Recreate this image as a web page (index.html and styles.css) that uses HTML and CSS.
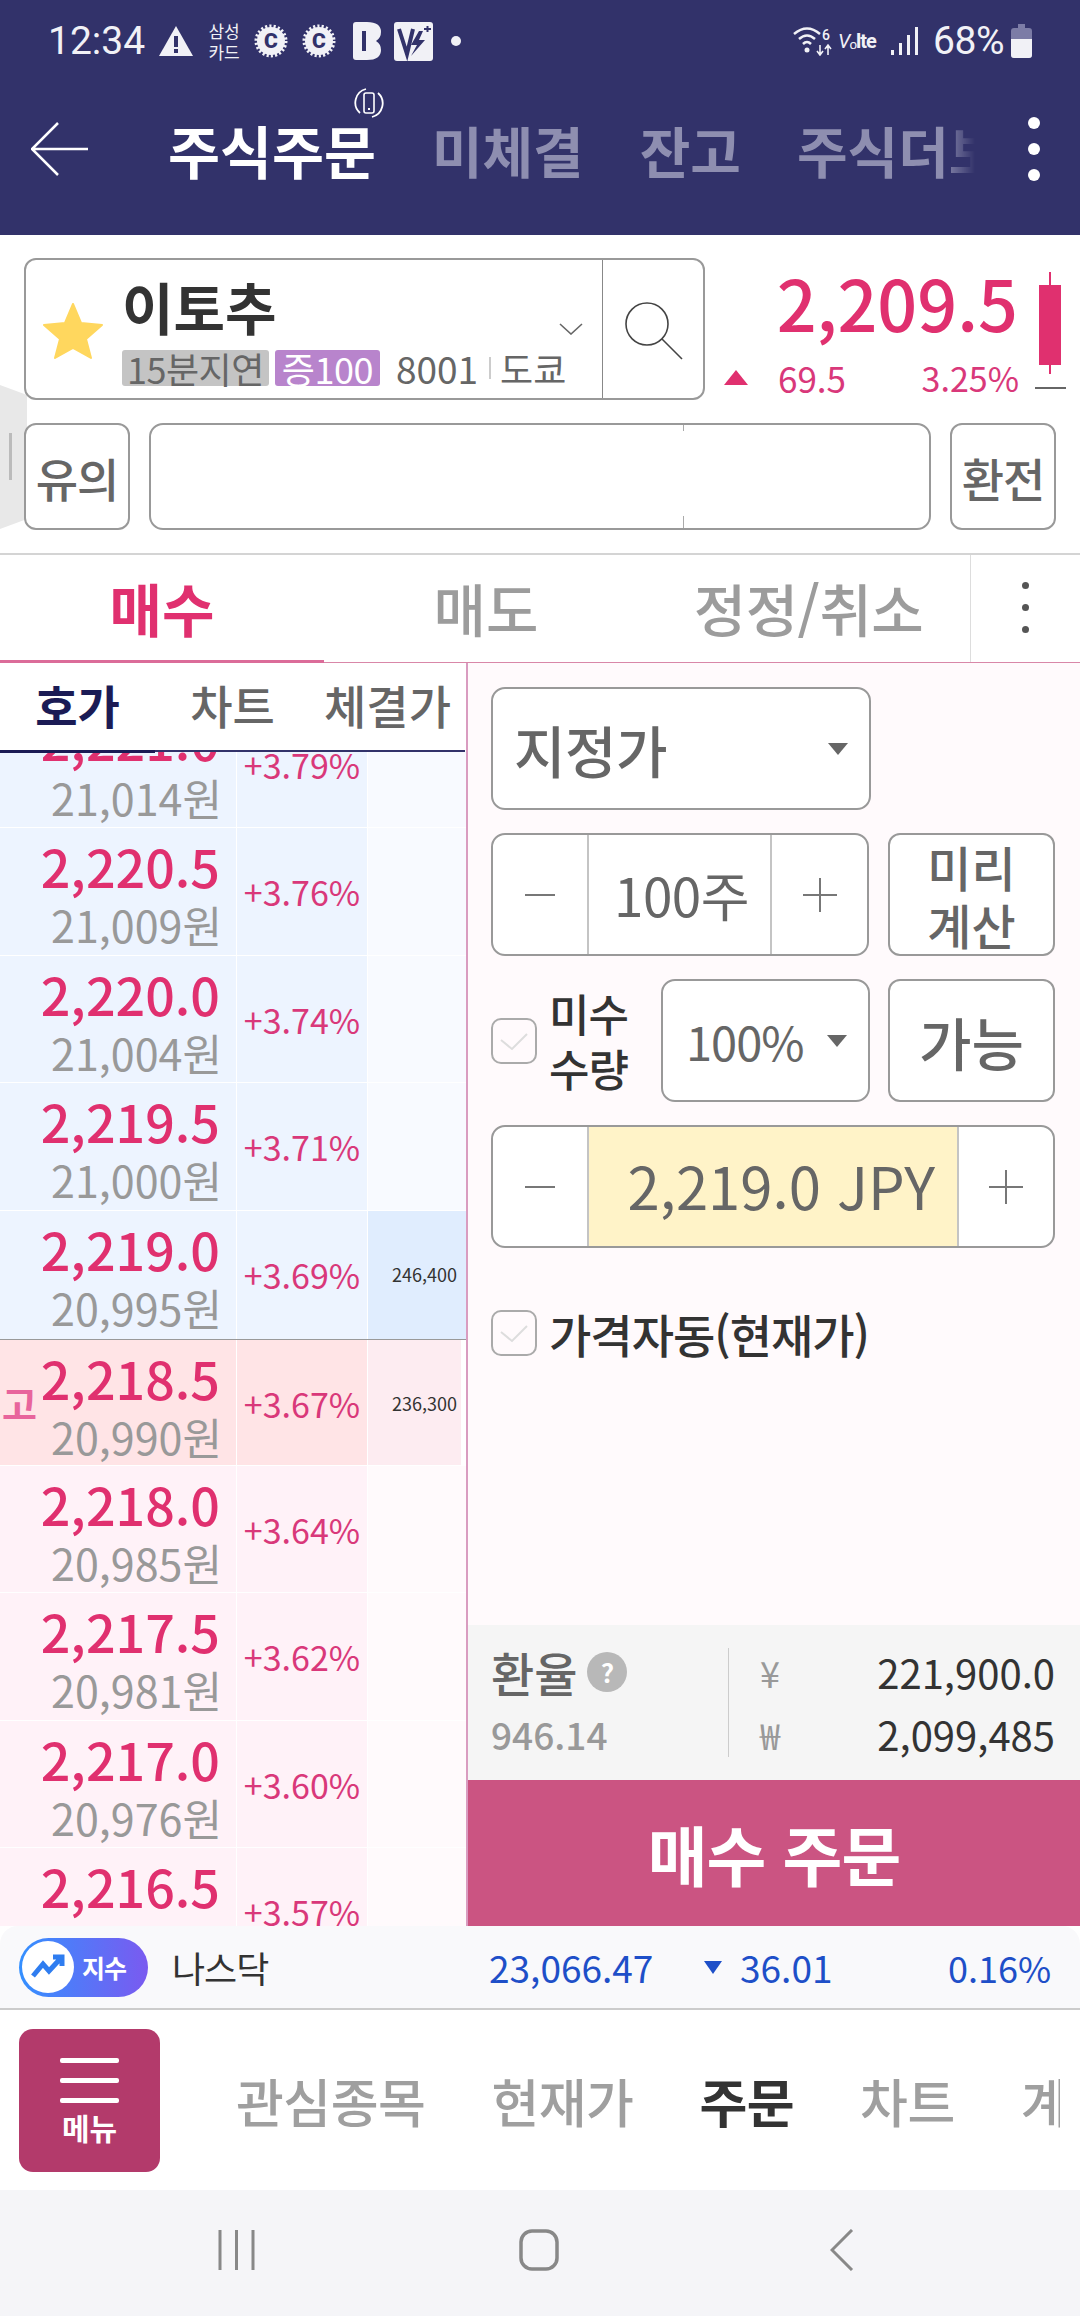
FILE: index.html
```html
<!DOCTYPE html>
<html lang="ko">
<head>
    <meta charset="utf-8" />
    <link rel="stylesheet" href="styles.css">
    <title>주식주문</title>
</head>

<body>
<div class="phone">

    <!-- 상단 -->
    <header class="appbar">
        <div class="status">
            <span class="clock">12:34</span>
            <svg class="st-warn" width="36" height="32" viewBox="0 0 36 32"><path d="M18 1 L35 31 H1 Z" fill="#f1f1f6"/><rect x="16" y="11" width="4" height="11" fill="#32326a"/><rect x="16" y="24" width="4" height="4" fill="#32326a"/></svg>
            <span class="st-card">삼성<br>카드</span>
            <svg class="st-badge" width="34" height="34" viewBox="0 0 34 34"><circle cx="17" cy="17" r="14" fill="#f1f1f6" stroke="#f1f1f6" stroke-width="5" stroke-dasharray="2 2"/><text x="17" y="24" text-anchor="middle" class="st-letter">C</text></svg>
            <svg class="st-badge" width="34" height="34" viewBox="0 0 34 34"><circle cx="17" cy="17" r="14" fill="#f1f1f6" stroke="#f1f1f6" stroke-width="5" stroke-dasharray="2 2"/><text x="17" y="24" text-anchor="middle" class="st-letter">C</text></svg>
            <svg class="st-b" width="28" height="38" viewBox="0 0 28 38"><path d="M3 0 H14 Q28 0 28 10 Q28 16 23 19 Q28 22 28 28 Q28 38 14 38 H3 Q0 38 0 35 V3 Q0 0 3 0 Z" fill="#f1f1f6"/><rect x="9" y="9" width="4" height="20" fill="#32326a"/></svg>
            <svg class="st-v" width="39" height="39" viewBox="0 0 39 39"><rect width="39" height="39" rx="3" fill="#f1f1f6"/><path d="M5 7 L13 32 L19 7" fill="none" stroke="#32326a" stroke-width="4"/><path d="M25 9 L17 23 H23 L17 34 L31 18 H25 L29 9 Z" fill="#32326a"/><path d="M30 7 H37 M33.5 4 V10" stroke="#32326a" stroke-width="2"/></svg>
            <span class="st-dot"></span>
            <span class="st-gap"></span>
            <svg width="40" height="30" viewBox="0 0 40 30"><g fill="none" stroke="#f1f1f6" stroke-width="2.5"><path d="M1 8 Q14 -3 27 8"/><path d="M6 13 Q14 6 22 13"/><path d="M10 18 Q14 14 18 18"/></g><circle cx="14" cy="24" r="2.5" fill="#f1f1f6"/><text x="33" y="14" text-anchor="middle" class="st-six">6</text><path d="M27 19 V28 M24 25 L27 29 L30 25 M35 29 V20 M32 23 L35 19 L38 23" stroke="#f1f1f6" stroke-width="1.6" fill="none"/></svg>
            <span class="st-volte"><i>V</i>ₒ<b>lte</b></span>
            <svg width="28" height="28" viewBox="0 0 28 28"><rect x="0" y="23" width="3" height="5" fill="#f1f1f6"/><rect x="8" y="16" width="3" height="12" fill="#f1f1f6"/><rect x="16" y="8" width="3" height="20" fill="#f1f1f6"/><rect x="24" y="0" width="3" height="28" fill="#f1f1f6"/></svg>
            <span class="st-pct">68%</span>
            <svg width="21" height="34" viewBox="0 0 21 34"><path d="M7 0 H14 V4 H18 Q21 4 21 7 V31 Q21 34 18 34 H3 Q0 34 0 31 V7 Q0 4 3 4 H7 Z" fill="#7c7ca6"/><path d="M0 15 H21 V31 Q21 34 18 34 H3 Q0 34 0 31 Z" fill="#f1f1f6"/></svg>
        </div>
        <div class="topnav">
            <svg class="back" width="57" height="54" viewBox="0 0 57 54"><path d="M27 1 L1 27 L27 53 M1 27 H57" fill="none" stroke="#fff" stroke-width="2.5"/></svg>
            <nav class="toptabs">
                <span class="toptab on">주식주문</span>
                <span class="toptab">미체결</span>
                <span class="toptab">잔고</span>
                <span class="toptab">주식더보기</span>
            </nav>
            <span class="kebab"><i></i><i></i><i></i></span>
        </div>
        <svg class="rotate" width="30" height="30" viewBox="0 0 30 30"><rect x="10" y="5" width="10" height="20" rx="2" fill="none" stroke="#fff" stroke-width="1.6"/><rect x="14" y="20" width="2" height="2" fill="#fff"/><path d="M6 25 A14 14 0 0 1 12 1 M24 5 A14 14 0 0 1 18 29" fill="none" stroke="#fff" stroke-width="1.8"/></svg>
    </header>

    <!-- 종목 -->
    <section class="stock">
        <span class="handle"></span>
        <div class="stock-top">
            <div class="stock-box">
                <div class="stock-info">
                    <svg class="star" width="60" height="56" viewBox="0 0 60 56"><path d="M30 1 L38 20 L59 22 L43 36 L48 55 L30 45 L12 55 L17 36 L1 22 L22 20 Z" fill="#ffd75e" stroke="#ffd75e" stroke-width="2" stroke-linejoin="round"/></svg>
                    <div class="stock-text">
                        <div class="stock-name">이토추</div>
                        <div class="stock-meta">
                            <span class="chip chip-grey">15분지연</span>
                            <span class="chip chip-purple">증100</span>
                            <span class="code">8001</span>
                            <span class="market">도쿄</span>
                        </div>
                    </div>
                    <svg class="chev" width="24" height="12" viewBox="0 0 24 12"><path d="M1 1 L12 11 L23 1" fill="none" stroke="#666" stroke-width="1.6"/></svg>
                </div>
                <div class="stock-search">
                    <svg width="60" height="60" viewBox="0 0 60 60"><circle cx="23" cy="22" r="21" fill="none" stroke="#444" stroke-width="1.6"/><path d="M38 37 L58 57" stroke="#444" stroke-width="1.6"/></svg>
                </div>
            </div>
            <div class="quote">
                <div class="quote-nums">
                    <div class="quote-price">2,209.5</div>
                    <div class="quote-sub">
                        <span class="tri-up"></span>
                        <span class="quote-diff">69.5</span>
                        <span class="quote-rate">3.25%</span>
                    </div>
                </div>
                <svg class="candle" width="31" height="118" viewBox="0 0 31 118"><rect x="14" y="0" width="2" height="102" fill="#e0306f"/><rect x="4" y="13" width="22" height="80" fill="#e0306f"/><rect x="0" y="115" width="31" height="2" fill="#666"/></svg>
            </div>
        </div>
        <div class="stock-bottom">
            <button class="box-btn side-btn">유의</button>
            <div class="notice"></div>
            <button class="box-btn side-btn">환전</button>
        </div>
    </section>

    <!-- 매수 매도 탭 -->
    <div class="ordertabs">
        <span class="ordertab on">매수</span>
        <span class="ordertab">매도</span>
        <span class="ordertab wide">정정/취소</span>
        <span class="ordermore"><i></i><i></i><i></i></span>
    </div>

    <main class="order">
        <section class="book">
            <div class="subtabs">
                <span class="subtab on">호가</span>
                <span class="subtab">차트</span>
                <span class="subtab">체결가</span>
            </div>
            <div class="rows">
                <div class="row buy first"><div class="c-price"><b>2,221.0</b><span>21,014원</span></div><div class="c-pct">+3.79%</div><div class="c-vol"></div></div>
                <div class="row buy"><div class="c-price"><b>2,220.5</b><span>21,009원</span></div><div class="c-pct">+3.76%</div><div class="c-vol"></div></div>
                <div class="row buy"><div class="c-price"><b>2,220.0</b><span>21,004원</span></div><div class="c-pct">+3.74%</div><div class="c-vol"></div></div>
                <div class="row buy"><div class="c-price"><b>2,219.5</b><span>21,000원</span></div><div class="c-pct">+3.71%</div><div class="c-vol"></div></div>
                <div class="row buy best"><div class="c-price"><b>2,219.0</b><span>20,995원</span></div><div class="c-pct">+3.69%</div><div class="c-vol">246,400</div></div>
                <div class="row sell best"><span class="high">고</span><div class="c-price"><b>2,218.5</b><span>20,990원</span></div><div class="c-pct">+3.67%</div><div class="c-vol">236,300</div></div>
                <div class="row sell"><div class="c-price"><b>2,218.0</b><span>20,985원</span></div><div class="c-pct">+3.64%</div><div class="c-vol"></div></div>
                <div class="row sell"><div class="c-price"><b>2,217.5</b><span>20,981원</span></div><div class="c-pct">+3.62%</div><div class="c-vol"></div></div>
                <div class="row sell"><div class="c-price"><b>2,217.0</b><span>20,976원</span></div><div class="c-pct">+3.60%</div><div class="c-vol"></div></div>
                <div class="row sell"><div class="c-price"><b>2,216.5</b><span>20,971원</span></div><div class="c-pct">+3.57%</div><div class="c-vol"></div></div>
            </div>
        </section>

        <section class="ticket">
            <div class="form">
                <div class="box select-type">지정가<span class="caret"></span></div>
                <div class="line">
                    <div class="box stepper qty">
                        <span class="step"><i class="minus"></i></span>
                        <span class="step-val">100주</span>
                        <span class="step step-r"><i class="plus"></i></span>
                    </div>
                    <button class="box-btn calc">미리<br>계산</button>
                </div>
                <div class="line">
                    <div class="check-wrap">
                        <span class="check"><svg width="30" height="20" viewBox="0 0 30 20"><path d="M2 9 L13 18 L28 3" fill="none" stroke="#ddd" stroke-width="2"/></svg></span>
                        <span class="check-label">미수<br>수량</span>
                    </div>
                    <div class="box select-pct">100%<span class="caret"></span></div>
                    <button class="box-btn able">가능</button>
                </div>
                <div class="box stepper price">
                    <span class="step"><i class="minus"></i></span>
                    <span class="step-val yellow">2,219.0 JPY</span>
                    <span class="step step-r"><i class="plus"></i></span>
                </div>
                <div class="auto">
                    <span class="check"><svg width="30" height="20" viewBox="0 0 30 20"><path d="M2 9 L13 18 L28 3" fill="none" stroke="#ddd" stroke-width="2"/></svg></span>
                    <span class="auto-label">가격자동(현재가)</span>
                </div>
            </div>
            <div class="rate">
                <div class="rate-left">
                    <div class="rate-title">환율<span class="help">?</span></div>
                    <div class="rate-val">946.14</div>
                </div>
                <div class="rate-right">
                    <div class="rate-line"><span class="cur">¥</span><span class="amt">221,900.0</span></div>
                    <div class="rate-line"><span class="cur">₩</span><span class="amt">2,099,485</span></div>
                </div>
            </div>
            <button class="submit">매수 주문</button>
        </section>
    </main>

    <!-- 지수 -->
    <div class="index">
        <span class="pill">
            <span class="pill-icon"><svg width="34" height="26" viewBox="0 0 34 26"><path d="M2 22 L12 10 L18 17 L30 4 M22 3 H31 V12" fill="none" stroke="#2f7df0" stroke-width="5"/></svg></span>
            <span class="pill-text">지수</span>
        </span>
        <span class="idx-name">나스닥</span>
        <span class="idx-val">23,066.47</span>
        <span class="tri-down"></span>
        <span class="idx-diff">36.01</span>
        <span class="idx-rate">0.16%</span>
    </div>

    <!-- 하단 메뉴 -->
    <div class="bottom">
        <div class="menu-btn">
            <i></i><i></i><i></i>
            <span>메뉴</span>
        </div>
        <nav class="bottom-tabs">
            <span class="b-tab">관심종목</span>
            <span class="b-tab">현재가</span>
            <span class="b-tab on">주문</span>
            <span class="b-tab">차트</span>
            <span class="b-tab">계좌</span>
        </nav>
    </div>

    <div class="navbar">
        <svg width="37" height="40" viewBox="0 0 37 40"><path d="M2 0 V40 M18.500 0 V40 M35 0 V40" stroke="#888" stroke-width="3"/></svg>
        <svg width="40" height="42" viewBox="0 0 40 42"><rect x="2" y="2" width="36" height="38" rx="11" fill="none" stroke="#888" stroke-width="3.500"/></svg>
        <svg class="nav-back" width="24" height="42" viewBox="0 0 24 42"><path d="M22 1 L2 21 L22 41" fill="none" stroke="#888" stroke-width="3"/></svg>
    </div>
</div>
</body>
</html>
```

FILE: styles.css
```css
* {
    box-sizing: border-box;
}
html, body {
    margin: 0;
    padding: 0;
}
body {
    font-family: "Noto Sans CJK KR", "Noto Sans", sans-serif;
    color: #333;
}
button {
    font-family: inherit;
    padding: 0;
}
i {
    font-style: normal;
}
.phone {
    width: 1080px;
    height: 2316px;
    overflow: hidden;
    display: flex;
    flex-direction: column;
    background: #fff;
    position: relative;
}

/* app bar */
.appbar {
    height: 235px;
    background: #32326a;
    flex: none;
    position: relative;
}
.status {
    height: 82px;
    display: flex;
    align-items: center;
    padding: 0 48px 0 48px;
    color: #f1f1f6;
    font-family: Roboto, sans-serif;
}
.clock, .st-pct {
    font-size: 39px;
}
.st-warn {
    margin-left: 13px;
}
.st-card {
    margin-left: 13px;
    font-family: "Noto Sans CJK KR", sans-serif;
    font-size: 17px;
    line-height: 21px;
    width: 34px;
    text-align: center;
}
.st-badge {
    margin-left: 13px;
}
.st-badge + .st-badge {
    margin-left: 14px;
}
.st-b {
    margin-left: 17px;
}
.st-v {
    margin-left: 13px;
}
.st-letter {
    font: 900 21px Roboto, sans-serif;
    fill: #32326a;
}
.st-six {
    font: 500 14px Roboto, sans-serif;
    fill: #f1f1f6;
}
.st-dot {
    width: 10px;
    height: 10px;
    border-radius: 50%;
    background: #f1f1f6;
    margin-left: 18px;
}
.st-gap {
    flex: 1;
}
.st-volte {
    font-size: 20px;
    margin: 0 10px 0 5px;
    white-space: nowrap;
    width: 43px;
    letter-spacing: -1px;
}
.st-volte i {
    font-style: italic;
}
.st-pct {
    margin: 0 7px 0 14px;
    letter-spacing: -0.5px;
}
.topnav {
    height: 143px;
    display: flex;
    align-items: center;
    padding: 0 0 9px 31px;
    position: relative;
}
.toptabs {
    margin-left: 80px;
    width: 807px;
    display: flex;
    gap: 56px;
    overflow: hidden;
    white-space: nowrap;
    -webkit-mask-image: linear-gradient(to right, #000 96%, transparent 100%);
    mask-image: linear-gradient(to right, #000 96%, transparent 100%);
}
.toptab {
    font-size: 55px;
    line-height: 84px;
    font-weight: 700;
    color: #8e8eb0;
    flex: none;
}
.toptab.on {
    color: #fff;
    font-size: 56.5px;
}
.kebab {
    display: flex;
    flex-direction: column;
    gap: 14px;
    margin-left: 53px;
}
.kebab i {
    width: 12px;
    height: 12px;
    border-radius: 50%;
    background: #fff;
}
.rotate {
    position: absolute;
    left: 354px;
    top: 88px;
}

/* stock */
.stock {
    height: 320px;
    flex: none;
    padding: 23px 24px 0;
    border-bottom: 2px solid #d4d4d4;
    position: relative;
}
.handle {
    position: absolute;
    left: 0;
    top: 150px;
    width: 27px;
    height: 144px;
    background: #e8e8e8;
    clip-path: polygon(0 0, 100% 7%, 100% 93%, 0 100%);
}
.handle:after {
    content: "";
    position: absolute;
    left: 9px;
    top: 48px;
    width: 3px;
    height: 47px;
    background: #bbb;
}
.stock-top {
    display: flex;
}
.stock-box {
    width: 681px;
    height: 142px;
    border: 2px solid #999;
    border-radius: 12px;
    background: #fff;
    display: flex;
    position: relative;
}
.stock-info {
    width: 576px;
    display: flex;
    padding-left: 17px;
    position: relative;
}
.star {
    margin-top: 43px;
}
.stock-text {
    margin-left: 19px;
}
.stock-name {
    font-size: 56px;
    font-weight: 700;
    line-height: 60px;
    margin-top: 16px;
}
.stock-meta {
    display: flex;
    align-items: center;
    margin-top: 14px;
    color: #666;
    font-size: 36px;
    line-height: 36px;
    white-space: nowrap;
}
.chip {
    height: 36px;
    border-radius: 3px;
    letter-spacing: -0.5px;
}
.chip-grey {
    background: #c4c4c4;
    padding: 0 5px;
}
.chip-purple {
    background: #b884cc;
    color: #fff;
    padding: 0 7px;
    margin-left: 6px;
}
.code {
    margin-left: 16px;
    font-size: 37px;
}
.market {
    margin-left: 11px;
    padding-left: 11px;
    background: linear-gradient(#ccc, #ccc) no-repeat 0 50% / 2px 22px;
}
.chev {
    position: absolute;
    left: 533px;
    top: 63px;
}
.stock-search {
    flex: 1;
    border-left: 1px solid #888;
    padding: 42px 0 0 21px;
}
.quote {
    flex: none;
    width: 361px;
    margin-right: -10px;
    display: flex;
    justify-content: space-between;
}
.quote-nums {
    margin-left: 19px;
    width: 295px;
    flex: none;
    margin-top: 7px;
}
.quote-price {
    font-size: 70px;
    line-height: 74px;
    font-weight: 500;
    color: #e0306f;
    text-align: right;
    padding-right: 1px;
}
.quote-sub {
    display: flex;
    align-items: center;
    margin-top: 18px;
    height: 40px;
    color: #d9387a;
}
.tri-up {
    width: 0;
    height: 0;
    border-left: 12px solid transparent;
    border-right: 12px solid transparent;
    border-bottom: 15px solid #e0306f;
}
.quote-diff {
    font-size: 35px;
    margin-left: 30px;
}
.quote-rate {
    font-size: 34px;
    margin-left: auto;
}
.candle {
    margin-top: 14px;
    flex: none;
}
.stock-bottom {
    display: flex;
    justify-content: space-between;
    margin-top: 23px;
}
.box-btn {
    background: #fff;
    border: 2px solid #999;
    border-radius: 12px;
    color: #666;
}
.side-btn {
    width: 106px;
    height: 107px;
    font-size: 46px;
    font-weight: 500;
    letter-spacing: -1px;
    position: relative;
}
.notice {
    width: 782px;
    height: 107px;
    border: 2px solid #999;
    border-radius: 14px;
    background: linear-gradient(#aaa, #aaa) no-repeat 532px 0 / 1px 6px, linear-gradient(#aaa, #aaa) no-repeat 532px 100% / 1px 12px, #fff;
}

/* order tabs */
.ordertabs {
    height: 108px;
    flex: none;
    display: flex;
    align-items: center;
    border-bottom: 1px solid #d987a8;
    position: relative;
}
.ordertab {
    width: 324px;
    text-align: center;
    font-size: 57px;
    font-weight: 500;
    color: #9c9c9c;
    height: 107px;
    line-height: 104px;
}
.ordertab.on {
    color: #e0306f;
    font-weight: 700;
    border-bottom: 3px solid #db6c99;
    height: 108px;
}
.ordertabs .wide {
    width: 323px;
    margin-left: -1px;
    letter-spacing: -0.5px;
    white-space: nowrap;
}
.ordermore {
    flex: 1;
    height: 107px;
    border-left: 1px solid #ddd;
    display: flex;
    flex-direction: column;
    align-items: center;
    justify-content: center;
    gap: 15px;
    padding-bottom: 2px;
}
.ordermore i {
    width: 7px;
    height: 7px;
    border-radius: 50%;
    background: #555;
}

/* order area */
.order {
    height: 1263px;
    flex: none;
    display: flex;
    overflow: hidden;
}
.book {
    width: 468px;
    flex: none;
    border-right: 2px solid #d99cc0;
    display: flex;
    flex-direction: column;
    overflow: hidden;
}
.subtabs {
    height: 89px;
    flex: none;
    display: flex;
    background: #fff;
    border-bottom: 2px solid #32326a;
    margin-right: 1px;
    position: relative;
    z-index: 2;
}
.subtab {
    width: 155px;
    flex: none;
    font-size: 46px;
    font-weight: 500;
    color: #666;
    line-height: 82px;
    text-align: center;
    white-space: nowrap;
}
.subtab.on {
    color: #1b1b55;
    font-weight: 700;
    border-bottom: 3px solid #1b1b55;
    height: 90px;
}
.rows {
    flex: 1;
    overflow: hidden;
}
.row {
    height: 127.5px;
    display: flex;
    position: relative;
    border-bottom: 1px solid #fff;
}
.row.first {
    margin-top: -51.5px;
}
.c-price {
    width: 237px;
    flex: none;
    text-align: right;
    padding: 8px 14px 0 0;
    border-right: 1px solid #fff;
}
.c-price b {
    display: block;
    font-size: 52px;
    font-weight: 500;
    line-height: 60px;
    color: #e0306f;
    padding-right: 2px;
}
.c-price span {
    display: block;
    font-size: 43px;
    line-height: 52px;
    margin-top: 2px;
    color: #999;
    white-space: nowrap;
}
.c-pct {
    width: 131px;
    flex: none;
    text-align: center;
    font-size: 34px;
    line-height: 127px;
    color: #d9387a;
    border-right: 1px solid #fff;
}
.c-vol {
    flex: 1;
    font-size: 18px;
    line-height: 127px;
    padding-left: 24px;
    color: #333;
}
.buy .c-price, .buy .c-pct {
    background: #edf4ff;
}
.buy .c-vol {
    background: #f8faff;
}
.buy.best {
    height: 129.5px;
    border-bottom: 1px solid #999;
}
.buy.best .c-vol {
    background: #e0edfe;
}
.sell .c-price, .sell .c-pct {
    background: #fff2f8;
}
.sell .c-vol {
    background: #fffafc;
}
.sell.best {
    height: 125.5px;
}
.sell.best .c-price, .sell.best .c-pct {
    background: #ffe4e6;
}
.sell.best .c-vol {
    background: #fdecf1;
    margin-right: 5px;
}
.high {
    position: absolute;
    left: 2px;
    top: 38px;
    font-size: 38px;
    line-height: 50px;
    font-weight: 700;
    color: #e8649c;
}

/* ticket */
.ticket {
    flex: 1;
    display: flex;
    flex-direction: column;
    background: #fffafc;
    min-width: 0;
}
.form {
    flex: 1;
    padding: 24px 25px 0 23px;
}
.box {
    background: #fff;
    border: 2px solid #999;
    border-radius: 14px;
    color: #666;
    height: 123px;
    display: flex;
    align-items: center;
}
.caret {
    width: 0;
    height: 0;
    border-left: 10px solid transparent;
    border-right: 10px solid transparent;
    border-top: 12px solid #666;
    margin-left: auto;
}
.select-type {
    width: 380px;
    font-size: 56px;
    font-weight: 500;
    padding: 0 21px 0 21px;
    letter-spacing: -0.5px;
}
.line {
    display: flex;
    justify-content: space-between;
    margin-top: 23px;
}
.qty {
    width: 378px;
}
.step {
    width: 96px;
    height: 100%;
    flex: none;
    display: flex;
    align-items: center;
    justify-content: center;
    border-right: 2px solid #c4c4c4;
}
.step-r {
    border-right: none;
    border-left: 2px solid #c4c4c4;
    margin-left: auto;
}
.minus {
    width: 30px;
    height: 2px;
    background: #777;
}
.plus {
    width: 34px;
    height: 34px;
    background: linear-gradient(#777, #777) no-repeat center / 100% 2px, linear-gradient(#777, #777) no-repeat center / 2px 100%;
}
.step-val {
    flex: 1;
    height: 100%;
    text-align: right;
    line-height: 119px;
}
.qty .step-val {
    font-size: 53px;
    padding-right: 21px;
    font-weight: 400;
    letter-spacing: -0.5px;
}
.qty .step-r {
    width: 97px;
}
.calc {
    width: 167px;
    height: 123px;
    font-size: 48px;
    line-height: 58px;
    font-weight: 500;
    white-space: nowrap;
}
.check-wrap {
    width: 170px;
    flex: none;
    display: flex;
    align-items: center;
}
.check {
    width: 46px;
    height: 46px;
    flex: none;
    border: 2px solid #aaa;
    border-radius: 10px;
    display: flex;
    align-items: center;
    justify-content: center;
}
.check-label {
    font-size: 44px;
    line-height: 55px;
    font-weight: 500;
    margin-left: 12px;
    text-align: center;
    letter-spacing: -1px;
}
.select-pct {
    width: 209px;
    font-size: 47px;
    padding: 0 21px 0 23px;
    margin-right: auto;
    letter-spacing: -1px;
}
.able {
    width: 167px;
    height: 123px;
    font-size: 57px;
    font-weight: 500;
}
.price {
    margin-top: 23px;
    width: 564px;
}
.price .yellow {
    background: #fff3c8;
    font-size: 58px;
    padding-right: 22px;
    line-height: 117px;
    white-space: nowrap;
}
.auto {
    display: flex;
    align-items: center;
    margin-top: 62px;
}
.auto-label {
    font-size: 46px;
    line-height: 46px;
    font-weight: 500;
    margin-left: 12px;
    letter-spacing: -1px;
    white-space: nowrap;
}
.rate {
    height: 155px;
    flex: none;
    background: #f5f5f5;
    display: flex;
    padding: 23px 25px 0 23px;
}
.rate-left {
    width: 238px;
    height: 109px;
    flex: none;
    border-right: 1px solid #ccc;
}
.rate-title {
    display: flex;
    align-items: center;
    font-size: 47px;
    line-height: 48px;
    font-weight: 500;
    color: #666;
}
.help {
    width: 40px;
    height: 40px;
    border-radius: 50%;
    background: #b8b8b8;
    color: #fff;
    font-size: 26px;
    line-height: 40px;
    font-weight: 700;
    text-align: center;
    margin-left: 10px;
}
.rate-val {
    font-size: 37px;
    line-height: 48px;
    margin-top: 14px;
    color: #999;
    font-weight: 500;
}
.rate-right {
    flex: 1;
    padding-left: 25px;
}
.rate-line {
    display: flex;
    justify-content: space-between;
    align-items: center;
    height: 48px;
    margin-bottom: 14px;
}
.cur {
    font-size: 36px;
    color: #999;
    width: 32px;
    text-align: center;
}
.amt {
    font-size: 40px;
    color: #333;
}
.submit {
    height: 146px;
    flex: none;
    border: none;
    background: #cb5482;
    color: #fff;
    font-size: 65px;
    font-weight: 700;
    letter-spacing: -1px;
}

/* index */
.index {
    height: 84px;
    flex: none;
    background: #f9f9fb;
    border-bottom: 2px solid #ccc;
    border-radius: 18px 18px 0 0;
    display: flex;
    align-items: center;
    padding-left: 19px;
    color: #1e4fc8;
    font-size: 37px;
    white-space: nowrap;
}
.pill {
    width: 129px;
    height: 59px;
    border-radius: 30px;
    background: linear-gradient(to right, #3490ff, #7a5af0);
    display: flex;
    align-items: center;
    flex: none;
}
.pill-icon {
    width: 52px;
    height: 52px;
    margin-left: 3px;
    background: #fff;
    border-radius: 50%;
    display: flex;
    align-items: center;
    justify-content: center;
}
.pill-text {
    color: #fff;
    font-size: 25px;
    font-weight: 700;
    margin-left: 8px;
    letter-spacing: -1px;
}
.idx-name {
    color: #333;
    font-size: 36px;
    margin-left: 24px;
    width: 317px;
    letter-spacing: -1px;
}
.idx-val {
    width: 215px;
}
.tri-down {
    width: 0;
    height: 0;
    border-left: 9px solid transparent;
    border-right: 9px solid transparent;
    border-top: 13px solid #1e4fc8;
    margin-right: 18px;
}
.idx-diff {
    width: 208px;
}
.idx-rate {
    font-size: 36px;
}

/* bottom menu */
.bottom {
    height: 180px;
    flex: none;
    background: #fff;
    display: flex;
    align-items: center;
    padding-left: 19px;
}
.menu-btn {
    width: 141px;
    height: 143px;
    background: #b33a6b;
    border-radius: 14px;
    display: flex;
    flex-direction: column;
    align-items: center;
    padding-top: 29px;
    flex: none;
}
.menu-btn i {
    width: 59px;
    height: 5px;
    border-radius: 2px;
    background: #fff;
    margin-bottom: 15px;
}
.menu-btn span {
    color: #fff;
    font-size: 30px;
    line-height: 34px;
    font-weight: 700;
    margin-top: -8px;
}
.bottom-tabs {
    width: 824px;
    margin-left: 76px;
    display: flex;
    gap: 66px;
    overflow: hidden;
    white-space: nowrap;
    color: #9f9f9f;
    font-size: 52px;
    font-weight: 500;
}
.b-tab {
    flex: none;
    letter-spacing: -0.5px;
}
.b-tab.on {
    color: #333;
    font-weight: 700;
}
.navbar {
    flex: 1;
    background: #f5f5f8;
    display: flex;
    align-items: center;
    padding: 0 0 6px 218px;
    gap: 264px;
}
.nav-back {
    margin-left: 7px;
}
```
